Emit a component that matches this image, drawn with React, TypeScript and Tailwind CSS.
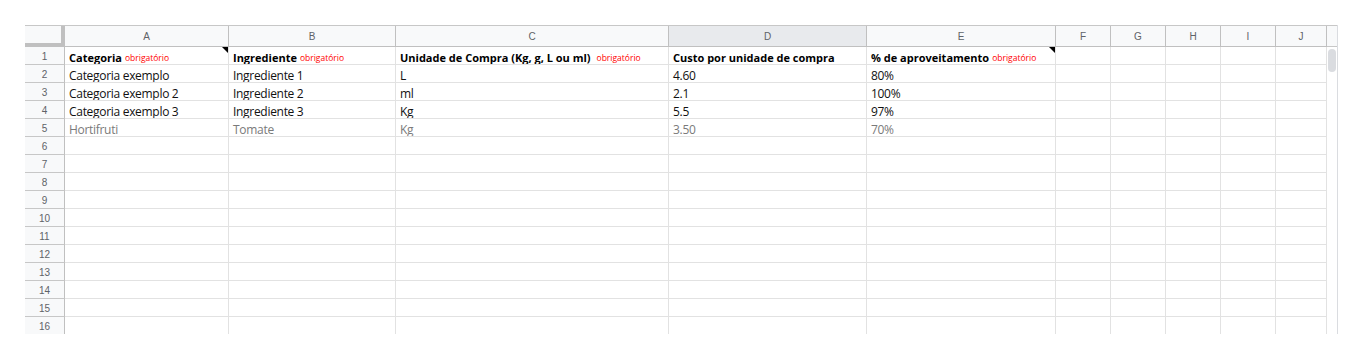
import React from 'react';

const cols = [
    { key: 'A', w: 'w-[164px]' },
    { key: 'B', w: 'w-[167px]' },
    { key: 'C', w: 'w-[273px]' },
    { key: 'D', w: 'w-[198px]' },
    { key: 'E', w: 'w-[189px]' },
    { key: 'F', w: 'w-[55px]' },
    { key: 'G', w: 'w-[55px]' },
    { key: 'H', w: 'w-[55px]' },
    { key: 'I', w: 'w-[55px]' },
    { key: 'J', w: 'w-[51px]' },
];

type Cell = { text: string; req?: boolean; gap?: boolean; note?: boolean };

const header: Cell[] = [
    { text: 'Categoria', req: true, note: true },
    { text: 'Ingrediente', req: true },
    { text: 'Unidade de Compra (Kg, g, L ou ml)', req: true, gap: true },
    { text: 'Custo por unidade de compra' },
    { text: '% de aproveitamento', req: true, note: true },
];

const rows: string[][] = [
    ['Categoria exemplo', 'Ingrediente 1', 'L', '4.60', '80%'],
    ['Categoria exemplo 2', 'Ingrediente 2', 'ml', '2.1', '100%'],
    ['Categoria exemplo 3', 'Ingrediente 3', 'Kg', '5.5', '97%'],
    ['Hortifruti', 'Tomate', 'Kg', '3.50', '70%'],
];

const font = "font-['Open_Sans','Liberation_Sans',sans-serif]";

const RowHeader = ({ n }: { n: number }) => (
    <div className="w-[40px] shrink-0 h-[18px] pt-[2px] bg-[#f8f9fa] border-r border-b border-r-[#c0c0c0] border-b-[#c7c7c7] flex items-center justify-center text-[10px] text-[#5f6368] font-['Liberation_Sans',Arial,sans-serif]">
        {n}
    </div>
);

export default function App() {
    return (
        <div className="w-[1365px] h-[357px] bg-white pt-[25px] pl-[25px]">
            <div className="flex h-[309px] overflow-hidden">
                <div className="flex flex-col">
                    {/* column headers */}
                    <div className="flex h-[22px] border-t border-[#c7c7c7]">
                        <div className="w-[40px] shrink-0 h-[21px] bg-[#f8f9fa] border-r-4 border-b-4 border-[#c0c0c0]"></div>
                        {cols.map((c) => (
                            <div
                                key={c.key}
                                className={`${c.w} shrink-0 h-[21px] border-r border-b border-[#c0c0c0] flex items-center justify-center text-[10px] text-[#5f6368] font-['Liberation_Sans',Arial,sans-serif] ${c.key === 'D' ? 'bg-[#e8eaed]' : 'bg-[#f8f9fa]'}`}
                            >
                                {c.key}
                            </div>
                        ))}
                    </div>
                    {/* row 1 */}
                    <div className="flex">
                        <RowHeader n={1} />
                        {cols.map((c, i) => {
                            const h = header[i];
                            return (
                                <div key={c.key} className={`${c.w} shrink-0 h-[18px] border-r border-b border-[#e2e2e2] relative flex items-end pl-[4px] whitespace-nowrap overflow-hidden ${font}`}>
                                    {h && (
                                        <>
                                            <span className="text-[11px] leading-[13px] font-bold text-black">{h.text}</span>
                                            {h.req && (
                                                <span className={`text-[8.5px] leading-[12px] text-[#ff0000] ${h.gap ? 'ml-[6px]' : 'ml-[3px]'}`}>obrigatório</span>
                                            )}
                                            {h.note && (
                                                <span className="absolute top-0 right-0 w-0 h-0 border-t-[6px] border-l-[6px] border-t-black border-l-transparent"></span>
                                            )}
                                        </>
                                    )}
                                </div>
                            );
                        })}
                    </div>
                    {/* data rows */}
                    {Array.from({ length: 15 }, (_, r) => (
                        <div key={r} className="flex">
                            <RowHeader n={r + 2} />
                            {cols.map((c, i) => {
                                const v = rows[r]?.[i];
                                return (
                                    <div key={c.key} className={`${c.w} shrink-0 h-[18px] border-r border-b border-[#e2e2e2] flex items-end pl-[4px] whitespace-nowrap overflow-hidden ${font}`}>
                                        {v && (
                                            <span className={`text-[12px] leading-[13px] tracking-[-0.3px] ${r === 3 ? 'text-[#7a7a7a]' : 'text-[#111]'}`}>{v}</span>
                                        )}
                                    </div>
                                );
                            })}
                        </div>
                    ))}
                </div>
                {/* vertical scrollbar */}
                <div className="w-[11px] shrink-0 border-r border-[#dadce0] flex flex-col">
                    <div className="h-[22px] border-t border-b border-[#c7c7c7] bg-[#f8f9fa]"></div>
                    <div className="pt-[2px] pl-[1px]">
                        <div className="w-[8px] h-[23px] rounded-full bg-[#dadce0]"></div>
                    </div>
                </div>
            </div>
        </div>
    );
}
